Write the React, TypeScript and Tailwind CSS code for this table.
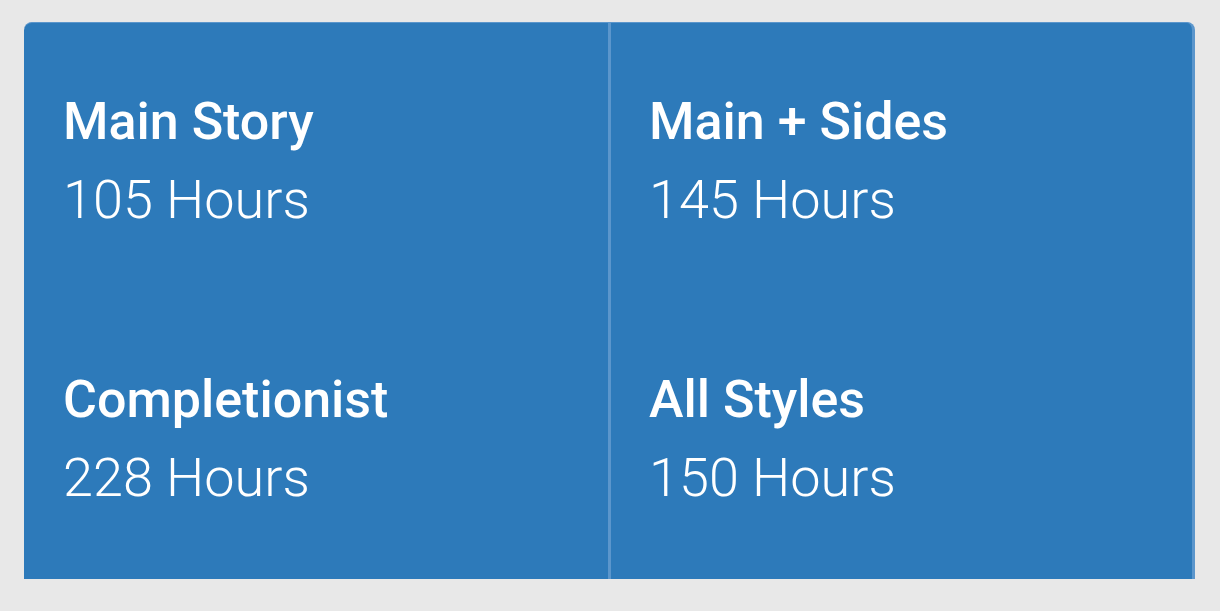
const stats = [
  { label: "Main Story", value: "105 Hours" },
  { label: "Main + Sides", value: "145 Hours" },
  { label: "Completionist", value: "228 Hours" },
  { label: "All Styles", value: "150 Hours" },
]

export default function App() {
  return (
    <div className="min-h-screen bg-[#e8e8e8] pt-[22px] pl-[24px] pr-[25px] font-['Roboto',sans-serif]">
      <div className="grid grid-cols-2 overflow-hidden rounded-t-[8px] border-t border-r-[3px] border-[#5b96cc] bg-[#2d7aba] text-white">
        {stats.map((s, i) => (
          <div
            key={s.label}
            className={
              i % 2 === 0
                ? "h-[278px] pl-[39px] pt-[60px]"
                : "h-[278px] border-l-[3px] border-[#5b96cc] pl-[38px] pt-[60px]"
            }
          >
            <div className="text-[52px] leading-[78px] font-medium">{s.label}</div>
            <div className="text-[54px] leading-[78px] font-light">{s.value}</div>
          </div>
        ))}
      </div>
    </div>
  )
}
